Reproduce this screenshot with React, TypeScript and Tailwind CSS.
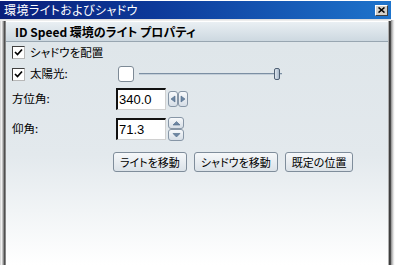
import { useState } from "react";

const font = "font-['Noto_Sans_CJK_JP','Noto_Sans',sans-serif] [font-feature-settings:'palt']";

const Check = ({ checked }: { checked: boolean }) => (
  <span className="flex h-[13px] w-[13px] items-center justify-center border border-t-[#404040] border-l-[#404040] border-r-[#b8b8b8] border-b-[#b8b8b8] bg-white">
    {checked && (
      <svg width="9" height="9" viewBox="0 0 9 9">
        <path d="M1 4 L3.5 6.5 L8 1.5" stroke="#000" strokeWidth="1.7" fill="none" />
      </svg>
    )}
  </span>
);

const NumberField = ({ value }: { value: string }) => (
  <div className="flex h-[22px] w-[50px] items-center border-t-2 border-l-2 border-r border-b border-t-[#111] border-l-[#111] border-r-[#d0d0d0] border-b-[#d0d0d0] bg-white pl-[1px] font-['Liberation_Sans',sans-serif] text-[13px] leading-none text-black">
    {value}
  </div>
);

const Arrow = ({ dir }: { dir: "left" | "right" | "up" | "down" }) => {
  const d = {
    left: "M5 1 L1 4 L5 7 Z",
    right: "M1 1 L5 4 L1 7 Z",
    up: "M1 5 L4.5 1.5 L8 5 Z",
    down: "M1 1.5 L4.5 5 L8 1.5 Z",
  }[dir];
  const w = dir === "left" || dir === "right" ? 6 : 9;
  const h = dir === "left" || dir === "right" ? 8 : 6;
  return (
    <svg width={w} height={h} viewBox={`0 0 ${w} ${h}`}>
      <path d={d} fill="#6d86a3" stroke="#4e6987" strokeWidth="0.6" />
    </svg>
  );
};

const spinPart =
  "flex items-center justify-center rounded-[3px] border border-[#8796a6] bg-[linear-gradient(#f7f9fb,#d6dee6)]";

const Button = ({ label }: { label: string }) => (
  <button className="flex h-[20px] items-center justify-center rounded-[3px] border border-[#7f8d9b] bg-[linear-gradient(#f6f8fa,#dbe2e8)] px-[6px] text-[11px] leading-none text-black">
    {label}
  </button>
);

export default function App() {
  const [shadow] = useState(true);
  const [sun] = useState(true);

  return (
    <div className={`flex h-[265px] w-[395px] overflow-hidden bg-white ${font}`}>
      <div className="flex w-[391px] flex-col">
        {/* title bar */}
        <div className="mt-[1px] flex h-[18px] items-center justify-between bg-[linear-gradient(to_right,#0a1f7a,#0d3a9a_40%,#1e74cc)] pl-[4px] pr-[3px] text-[12px] leading-none tracking-[0.4px] text-white">
          <span>環境ライトおよびシャドウ</span>
          <span className="flex h-[11px] w-[13px] items-center justify-center border border-t-white border-l-white border-r-[#404040] border-b-[#404040] bg-[#d4d0c8]">
            <svg width="7" height="6" viewBox="0 0 7 6">
              <path d="M0.5 0.5 L6.5 5.5 M6.5 0.5 L0.5 5.5" stroke="#000" strokeWidth="1.6" />
            </svg>
          </span>
        </div>
        <div className="h-[2px] bg-[linear-gradient(#d8d8d8,#f4f4f4)]" />

        <div className="flex flex-1">
          <div className="w-[6px] bg-[linear-gradient(to_right,#cfcfcf,#f2f2f2_25%,#9a9a9a_55%,#3c3c3c_80%,#bcbcbc)]" />

          <div className="flex flex-1 flex-col bg-[linear-gradient(#dfe6ea_10%,#e3e9ed_55%,#ffffff)] text-[11.5px] leading-none text-black">
            {/* header */}
            <div className="flex h-[21px] items-center border-t border-b border-t-white border-b-[#98a6b1] bg-[linear-gradient(#e9eff3,#cdd8e0)] pl-[9px] text-[12px] font-bold">
              ID Speed 環境のライト プロパティ
            </div>

            <div className="flex h-[21px] items-center gap-[5px] pl-[6px]">
              <Check checked={shadow} />
              <span>シャドウを配置</span>
            </div>

            <div className="flex h-[22px] items-center pl-[6px]">
              <Check checked={sun} />
              <span className="ml-[5px] w-[88px]">太陽光:</span>
              <span className="h-[16px] w-[16px] rounded-[3px] border border-[#7d8a96] bg-white" />
              <div className="relative ml-[5px] h-[14px] w-[143px]">
                <div className="absolute left-0 right-0 top-[6px] h-[1px] bg-[#7b8fa3]" />
                <div className="absolute left-0 right-0 top-[7px] h-[1px] bg-[#c3ced8]" />
                <div className="absolute left-[135px] top-[1px] h-[12px] w-[6px] rounded-[2px] border border-[#4f6074] bg-[linear-gradient(to_right,#dfe7ef,#a7b8ca)]" />
              </div>
            </div>

            <div className="mt-[3px] flex h-[22px] items-center pl-[6px]">
              <span className="w-[104px]">方位角:</span>
              <NumberField value="340.0" />
              <div className="ml-[2px] flex h-[16px]">
                <span className={`${spinPart} w-[10px]`}>
                  <Arrow dir="left" />
                </span>
                <span className={`${spinPart} w-[10px]`}>
                  <Arrow dir="right" />
                </span>
              </div>
            </div>

            <div className="mt-[8px] flex h-[22px] items-center pl-[6px]">
              <span className="w-[104px]">仰角:</span>
              <NumberField value="71.3" />
              <div className="ml-[2px] flex h-[24px] w-[16px] flex-col">
                <span className={`${spinPart} h-[12px]`}>
                  <Arrow dir="up" />
                </span>
                <span className={`${spinPart} h-[12px]`}>
                  <Arrow dir="down" />
                </span>
              </div>
            </div>

            <div className="mt-[12px] flex gap-[7px] pl-[107px]">
              <Button label="ライトを移動" />
              <Button label="シャドウを移動" />
              <Button label="既定の位置" />
            </div>
          </div>

          <div className="w-[3px] bg-[linear-gradient(to_right,#f0f0f0,#3c3c3c_45%,#505050)]" />
        </div>
      </div>
      <div className="mt-[20px] w-[4px] bg-[linear-gradient(to_right,#8a8a8a,#cfcfcf_45%,#f4f4f4_75%,#ffffff)]" />
    </div>
  );
}
